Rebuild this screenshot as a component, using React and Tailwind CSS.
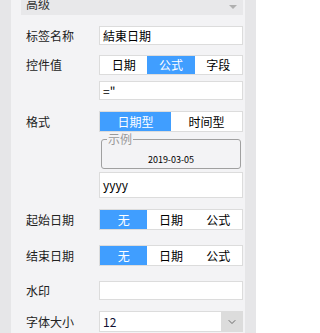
import { ChevronDown } from "lucide-react";

const font = { fontFamily: '"Noto Sans CJK SC", "Noto Sans", sans-serif' };

const Segmented = ({ options, active, h = "h-[21px]" }) => (
  <div className={`flex w-[144px] ${h} border border-[#dcdcdc] bg-white`}>
    {options.map((opt, i) => (
      <div
        key={opt}
        className={`flex-1 flex items-center justify-center text-[12px] ${
          i === active ? "bg-[#409eff] text-white" : "text-black"
        }`}
      >
        {opt}
      </div>
    ))}
  </div>
);

const Row = ({ label, labelH = "h-[21px]", className = "", children }) => (
  <div className={`flex ${className}`}>
    <div className={`w-[73px] ${labelH} flex items-center text-[12px] text-[#222]`}>
      {label}
    </div>
    <div className="flex flex-col">{children}</div>
  </div>
);

const Input = ({ value = "", h = "h-[19px]" }) => (
  <div
    className={`w-[144px] ${h} border border-[#dcdcdc] bg-white flex items-center px-[3px] text-[12px] text-black`}
  >
    {value}
  </div>
);

export default function App() {
  return (
    <div className="flex w-[256px] h-[333px] overflow-hidden bg-[#e6e6e8]" style={font}>
      <div className="w-[11px] shrink-0" />
      <div className="w-[234px] shrink-0 bg-[#f3f3f5] pl-[10px] pr-[2px]">
        <div className="h-[15px] bg-[#e8e8ea] flex items-start justify-between pl-[5px] pr-[6px] overflow-hidden">
          <span className="text-[12px] leading-[12px] -mt-[2px] text-[#333]">高级</span>
          <span className="mt-[5px] w-0 h-0 border-l-[4px] border-r-[4px] border-t-[4px] border-l-transparent border-r-transparent border-t-[#b0b0b0]" />
        </div>

        <div className="pl-[5px]">
          <Row label="标签名称" labelH="h-[19px]" className="mt-[11px]">
            <Input value="結東日期" />
          </Row>

          <Row label="控件值" labelH="h-[20px]" className="mt-[10px]">
            <Segmented options={["日期", "公式", "字段"]} active={1} h="h-[20px]" />
            <div className="mt-[6px]">
              <Input value={'="'} />
            </div>
          </Row>

          <Row label="格式" className="mt-[11px]">
            <Segmented options={["日期型", "时间型"]} active={0} />
            <fieldset className="mt-[1px] mx-[2px] w-[140px] h-[36px] border border-[#a0a0a0] rounded-[3px] px-[5px] pb-[3px]">
              <legend className="px-[1px] text-[12px] leading-[12px] text-[#999]">示例</legend>
              <div className="flex justify-center pt-[10px] text-[9px] leading-[10px] text-black">
                2019-03-05
              </div>
            </fieldset>
            <div className="mt-[3px]">
              <Input value="yyyy" h="h-[26px]" />
            </div>
          </Row>

          <Row label="起始日期" className="mt-[11px]">
            <Segmented options={["无", "日期", "公式"]} active={0} />
          </Row>

          <Row label="结束日期" className="mt-[15px]">
            <Segmented options={["无", "日期", "公式"]} active={0} />
          </Row>

          <Row label="水印" labelH="h-[19px]" className="mt-[15px]">
            <Input />
          </Row>

          <Row label="字体大小" className="mt-[11px]">
            <div className="w-[144px] h-[21px] border border-[#dcdcdc] bg-white flex items-center">
              <span className="flex-1 px-[3px] text-[12px] text-[#111133]">12</span>
              <span className="w-[21px] h-full bg-[#dcdcdc] flex items-center justify-center">
                <ChevronDown size={12} strokeWidth={1.5} className="text-[#444]" />
              </span>
            </div>
          </Row>
        </div>
      </div>
      <div className="flex-1" />
    </div>
  );
}
